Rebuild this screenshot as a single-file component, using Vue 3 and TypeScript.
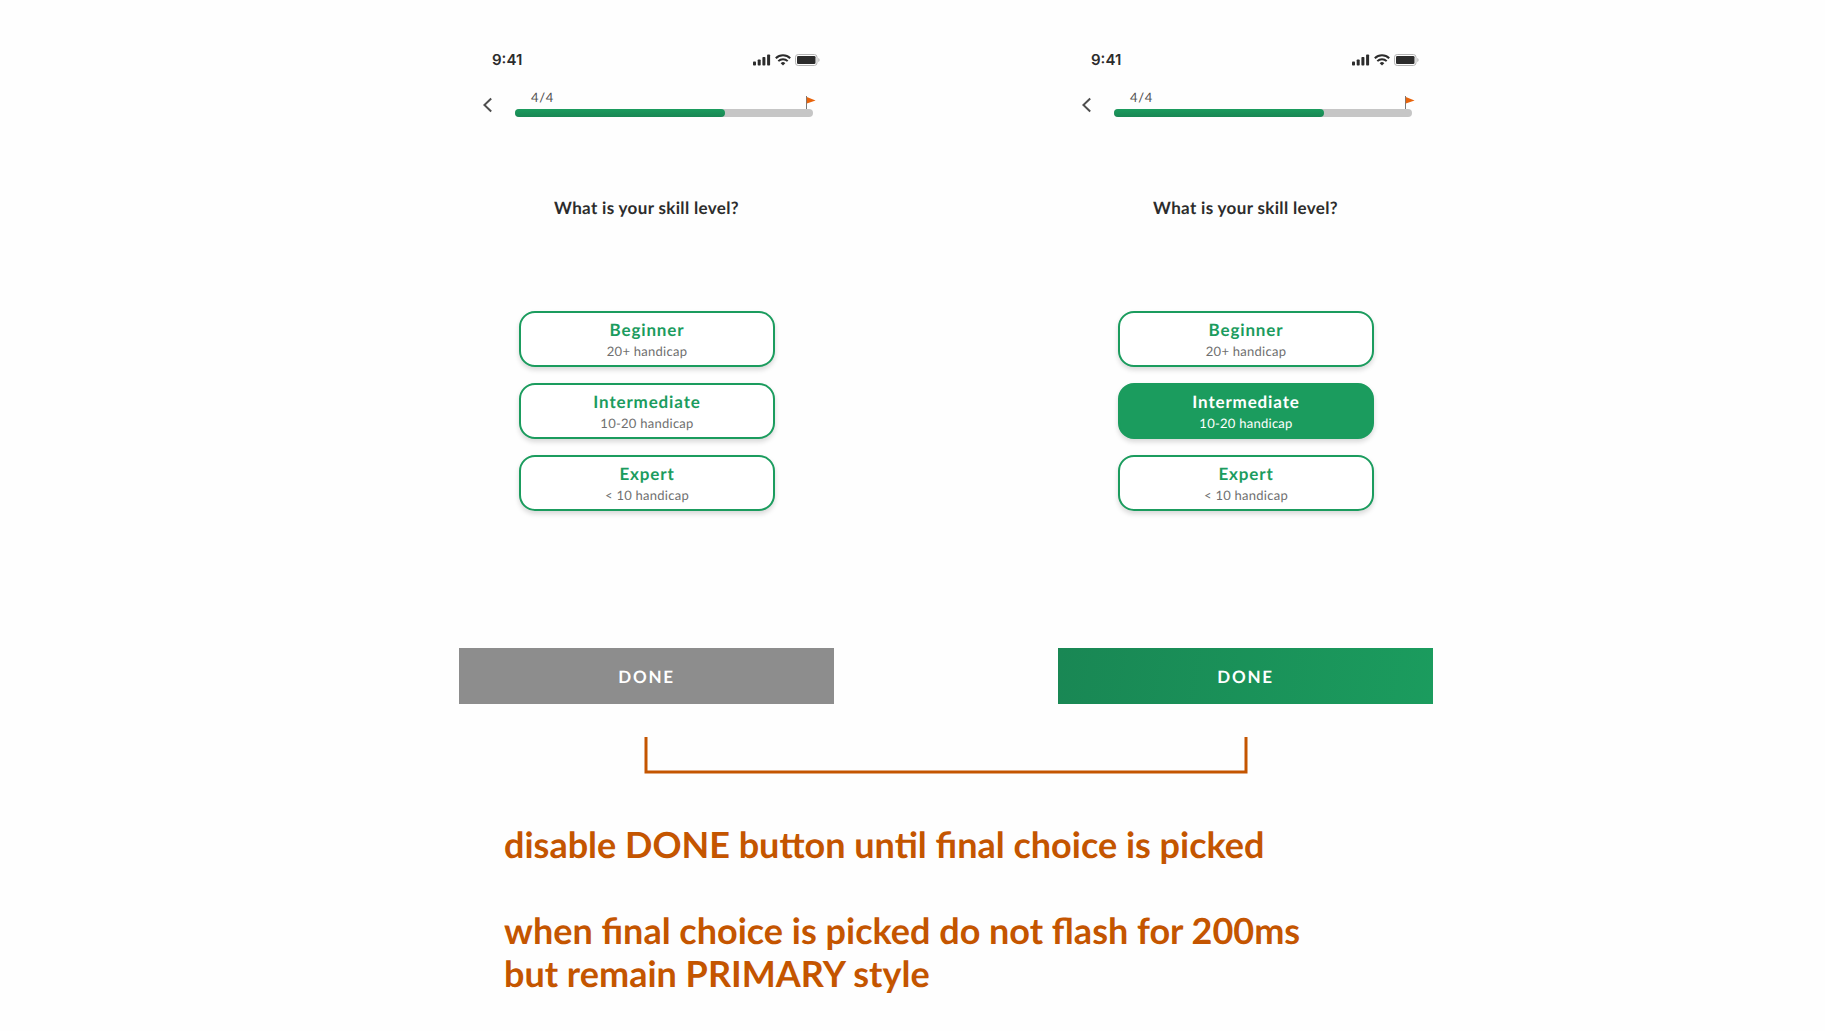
<script setup lang="ts">
import { ref } from 'vue'

interface Level {
  name: string
  range: string
}

interface Screen {
  id: string
  picked: string | null
}

const levels: Level[] = [
  { name: 'Beginner', range: '20+ handicap' },
  { name: 'Intermediate', range: '10-20 handicap' },
  { name: 'Expert', range: '< 10 handicap' },
]

const screens = ref<Screen[]>([
  { id: 'disabled', picked: null },
  { id: 'enabled', picked: 'Intermediate' },
])
</script>

<template>
  <main class="board">
    <div class="screens">
      <section v-for="screen in screens" :key="screen.id" class="phone">
        <div class="status">
          <span class="time">9:41</span>
          <div class="indicators">
            <svg class="signal" width="18" height="12" viewBox="0 0 18 12" aria-hidden="true">
              <rect x="0" y="7.5" width="3" height="4" rx="0.8" />
              <rect x="4.7" y="5.5" width="3" height="6" rx="0.8" />
              <rect x="9.4" y="3" width="3" height="8.5" rx="0.8" />
              <rect x="14.1" y="0.5" width="3" height="11" rx="0.8" />
            </svg>
            <svg class="wifi" width="16" height="12" viewBox="0 0 16 12" aria-hidden="true">
              <path d="M0.8 4.3a10.3 10.3 0 0 1 14.4 0" />
              <path d="M3.3 7.1a6.7 6.7 0 0 1 9.4 0" />
              <path class="dot" d="M8 11.5 5.7 9.2a3.3 3.3 0 0 1 4.6 0Z" />
            </svg>
            <svg class="battery" width="25" height="12" viewBox="0 0 25 12" aria-hidden="true">
              <rect class="shell" x="0.5" y="0.5" width="21.5" height="11" rx="2.7" />
              <rect x="2" y="2" width="18.5" height="8" rx="1.3" />
              <path class="cap" d="M23.3 4v4a2.2 2.2 0 0 0 0-4Z" />
            </svg>
          </div>
        </div>

        <header class="progress">
          <button class="back" type="button" aria-label="Back">
            <svg width="10" height="16" viewBox="0 0 10 16" aria-hidden="true">
              <path d="M8.2 1.5 1.4 8l6.8 6.5" />
            </svg>
          </button>
          <div class="meter">
            <span class="step">4/4</span>
            <div
              class="track"
              role="progressbar"
              aria-label="Questions"
              aria-valuemin="0"
              aria-valuemax="4"
              aria-valuenow="4"
            >
              <div class="fill"></div>
              <svg class="flag" width="12" height="13" viewBox="0 0 12 13" aria-hidden="true">
                <path class="pole" d="M2.5 0v13" />
                <path class="cloth" d="M2.8 1 11.6 4.4 2.8 7.6Z" />
              </svg>
            </div>
          </div>
        </header>

        <h1 class="question">What is your skill level?</h1>

        <div class="choices">
          <button
            v-for="level in levels"
            :key="level.name"
            type="button"
            class="choice"
            :class="{ picked: screen.picked === level.name }"
            :aria-pressed="screen.picked === level.name"
            @click="screen.picked = level.name"
          >
            <span class="name">{{ level.name }}</span>
            <span class="range">{{ level.range }}</span>
          </button>
        </div>

        <button class="done" type="button" :disabled="!screen.picked">DONE</button>
      </section>
    </div>

    <div class="link">
      <svg viewBox="0 0 604 37" aria-hidden="true">
        <path d="M2 0V35H602V0" />
      </svg>
    </div>

    <div class="notes">
      <p>disable DONE button until final choice is picked</p>
      <p>when final choice is picked do not flash for 200ms<br />but remain PRIMARY style</p>
    </div>
  </main>
</template>

<style>
body {
  margin: 0;
  background: #fefefe;
}
</style>

<style scoped>
.board {
  box-sizing: border-box;
  width: 100%;
  max-width: 1041px;
  margin: 0 auto;
  padding: 38px 0 24px 67px;
  font-family: Lato, "Open Sans", sans-serif;
  text-rendering: geometricPrecision;
  color: #2c2c2c;
}

button {
  font: inherit;
  text-rendering: inherit;
  border: 0;
  padding: 0;
  cursor: pointer;
}

.screens {
  display: flex;
  justify-content: space-between;
  gap: 32px;
}

.phone {
  display: flex;
  flex-direction: column;
  flex: 0 1 375px;
}

.status {
  display: flex;
  align-items: center;
  justify-content: space-between;
  height: 44px;
  padding: 0 14px 0 33px;
}

.time {
  font: 600 15px/20px Inter, sans-serif;
}

.indicators {
  display: flex;
  align-items: center;
  gap: 4px;
  fill: #2c2c2c;
}

.indicators svg {
  display: block;
}

.wifi path {
  fill: none;
  stroke: #2c2c2c;
  stroke-width: 2;
}

.wifi .dot {
  fill: #2c2c2c;
  stroke: none;
}

.battery .shell {
  fill: none;
  stroke: #b4b4b4;
}

.battery .cap {
  fill: #b4b4b4;
}

.progress {
  display: flex;
  align-items: flex-end;
  gap: 22px;
  padding: 7px 21px 0 24px;
}

.back {
  display: flex;
  align-items: center;
  width: 10px;
  height: 24px;
  background: none;
}

.back path {
  fill: none;
  stroke: #4f4f4f;
  stroke-width: 2;
}

.meter {
  flex: 1;
}

.step {
  display: block;
  padding: 0 16px 4px;
  font-size: 13px;
  line-height: 16px;
  letter-spacing: 0.05em;
  color: #4f4f4f;
}

.track {
  position: relative;
  height: 8px;
  border-radius: 4px;
  background: #c6c6c6;
}

.fill {
  width: 70.5%;
  height: 100%;
  border-radius: 4px;
  background: linear-gradient(#1b9c5e, #198754);
}

.flag {
  position: absolute;
  right: -3px;
  bottom: 8px;
}

.pole {
  stroke: #777;
}

.cloth {
  fill: #e8640c;
}

.question {
  margin: 79px 0 0;
  font-size: 17px;
  font-weight: 700;
  line-height: 24px;
  letter-spacing: 0.02em;
  text-align: center;
}

.choices {
  display: flex;
  flex-direction: column;
  gap: 16px;
  margin: 91px 59px 0 60px;
}

.choice {
  display: flex;
  flex-direction: column;
  align-items: center;
  justify-content: center;
  height: 56px;
  padding-top: 2px;
  border: 2px solid #1b9c5e;
  border-radius: 16px;
  background: #fff;
  box-shadow: 0 3px 5px rgba(0, 0, 0, 0.15);
}

.name {
  font-size: 17px;
  font-weight: 700;
  line-height: 22px;
  letter-spacing: 0.05em;
  color: #1b9c5e;
}

.range {
  font-size: 13px;
  line-height: 20px;
  letter-spacing: 0.02em;
  color: #6f6f6f;
}

.picked {
  background: #1b9c5e;
}

.picked .name,
.picked .range {
  color: #fff;
}

.done {
  height: 56px;
  margin-top: 137px;
  font-size: 17px;
  font-weight: 700;
  letter-spacing: 0.1em;
  color: #fff;
  background: linear-gradient(100deg, #198754, #1b9c5e);
}

.done:disabled {
  background: #8d8d8d;
  cursor: default;
}

.link {
  padding: 33px 185px 0;
}

.link svg {
  display: block;
  width: 100%;
}

.link path {
  fill: none;
  stroke: #c45500;
  stroke-width: 3;
}

.notes {
  display: flex;
  flex-direction: column;
  gap: 43px;
  margin: 49px 0 0 45px;
  font-size: 36px;
  font-weight: 700;
  line-height: 43px;
  color: #c45500;
}

.notes p {
  margin: 0;
}
</style>
